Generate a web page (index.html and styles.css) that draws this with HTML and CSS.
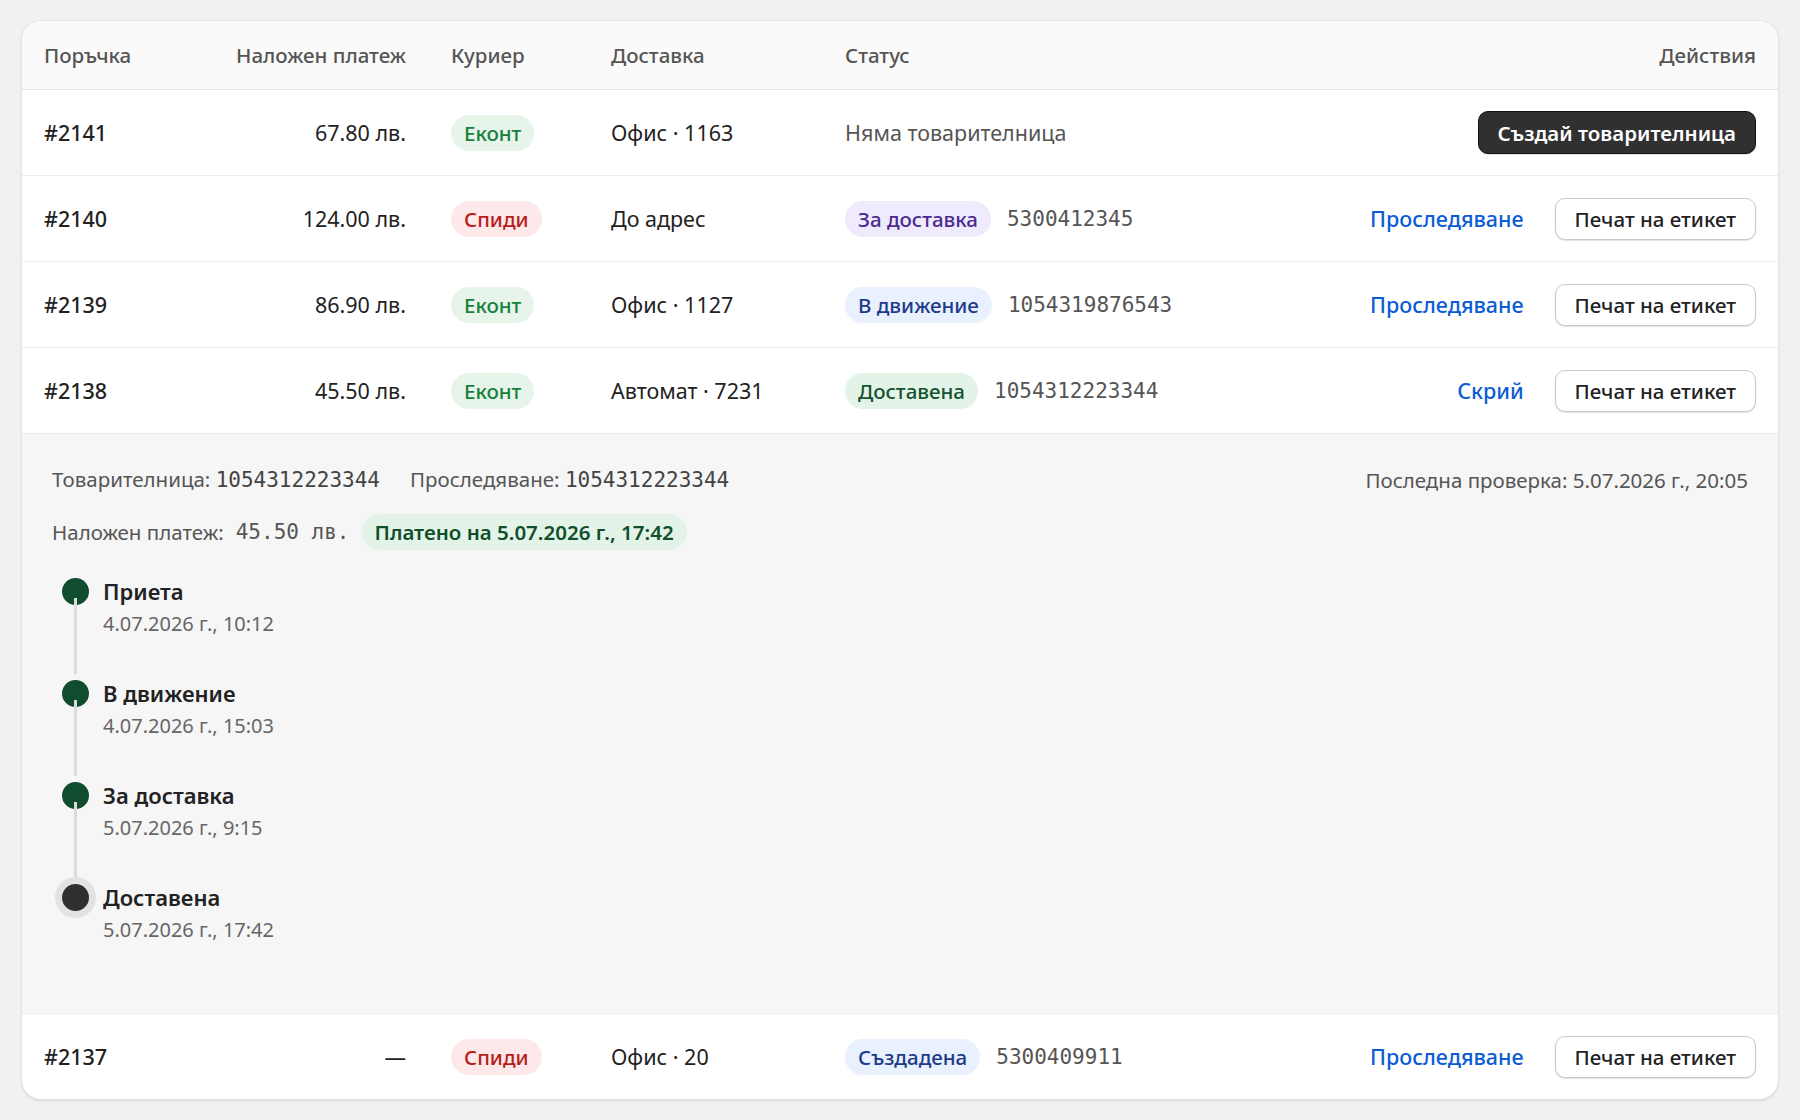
FILE: index.html
```html
<!DOCTYPE html>
<html lang="bg">
<head>
    <meta charset="UTF-8">
    <meta name="viewport" content="width=device-width, initial-scale=1.0">
    <title>Поръчки и товарителници</title>
    <link rel="stylesheet" href="styles.css">
</head>
<body>
    <div class="orders">
        <div class="row head">
            <div>Поръчка</div>
            <div class="amount">Наложен платеж</div>
            <div>Куриер</div>
            <div>Доставка</div>
            <div>Статус</div>
            <div class="actions">Действия</div>
        </div>

        <div class="row">
            <div class="order">#2141</div>
            <div class="amount">67.80 лв.</div>
            <div><span class="pill econt">Еконт</span></div>
            <div>Офис · 1163</div>
            <div class="status"><span class="muted">Няма товарителница</span></div>
            <div class="actions"><button class="btn dark">Създай товарителница</button></div>
        </div>

        <div class="row">
            <div class="order">#2140</div>
            <div class="amount">124.00 лв.</div>
            <div><span class="pill speedy">Спиди</span></div>
            <div>До адрес</div>
            <div class="status"><span class="pill out">За доставка</span><span class="track">5300412345</span></div>
            <div class="actions"><a class="link" href="#">Проследяване</a><button class="btn">Печат на етикет</button></div>
        </div>

        <div class="row">
            <div class="order">#2139</div>
            <div class="amount">86.90 лв.</div>
            <div><span class="pill econt">Еконт</span></div>
            <div>Офис · 1127</div>
            <div class="status"><span class="pill transit">В движение</span><span class="track">1054319876543</span></div>
            <div class="actions"><a class="link" href="#">Проследяване</a><button class="btn">Печат на етикет</button></div>
        </div>

        <div class="row">
            <div class="order">#2138</div>
            <div class="amount">45.50 лв.</div>
            <div><span class="pill econt">Еконт</span></div>
            <div>Автомат · 7231</div>
            <div class="status"><span class="pill done">Доставена</span><span class="track">1054312223344</span></div>
            <div class="actions"><a class="link" href="#">Скрий</a><button class="btn">Печат на етикет</button></div>
        </div>

        <div class="details">
            <div class="details-line">
                <div class="ids">
                    <span>Товарителница: <span class="mono">1054312223344</span></span>
                    <span>Проследяване: <span class="mono">1054312223344</span></span>
                </div>
                <span>Последна проверка: 5.07.2026 г., 20:05</span>
            </div>
            <div class="details-cod">
                <span>Наложен платеж:</span>
                <span class="mono">45.50 лв.</span>
                <span class="pill paid">Платено на 5.07.2026 г., 17:42</span>
            </div>
            <ul class="timeline">
                <li class="step">
                    <div class="step-title">Приета</div>
                    <div class="step-date">4.07.2026 г., 10:12</div>
                </li>
                <li class="step">
                    <div class="step-title">В движение</div>
                    <div class="step-date">4.07.2026 г., 15:03</div>
                </li>
                <li class="step">
                    <div class="step-title">За доставка</div>
                    <div class="step-date">5.07.2026 г., 9:15</div>
                </li>
                <li class="step current">
                    <div class="step-title">Доставена</div>
                    <div class="step-date">5.07.2026 г., 17:42</div>
                </li>
            </ul>
        </div>

        <div class="row">
            <div class="order">#2137</div>
            <div class="amount">—</div>
            <div><span class="pill speedy">Спиди</span></div>
            <div>Офис · 20</div>
            <div class="status"><span class="pill created">Създадена</span><span class="track">5300409911</span></div>
            <div class="actions"><a class="link" href="#">Проследяване</a><button class="btn">Печат на етикет</button></div>
        </div>
    </div>
</body>
</html>
```

FILE: styles.css
```css
html, body {
    margin: 0;
    padding: 0;
    background: #f1f1f1;
    font-family: 'Noto Sans', 'Open Sans', sans-serif;
    color: #222;
}

body {
    padding: 20px 21px;
}

.orders {
    background: white;
    border: 1px solid #e4e4e4;
    border-radius: 20px;
    box-shadow: 0 1px 2px rgba(0, 0, 0, 0.1);
    overflow: hidden;
}

.row {
    display: grid;
    grid-template-columns: 120px 197px 115px 189px 1fr auto;
    column-gap: 45px;
    align-items: center;
    height: 85px;
    padding: 0 22px;
    font-size: 21.5px;
    border-bottom: 1px solid #ececec;
}

.row:last-child {
    border-bottom: none;
}

.head {
    height: 68px;
    background: #fafafa;
    color: #555;
    font-size: 20.5px;
    font-weight: 500;
    border-bottom: 1px solid #e2e2e2;
}

.order {
    font-weight: 500;
}

.amount {
    text-align: right;
}

.pill {
    display: inline-flex;
    align-items: center;
    height: 36px;
    padding: 0 13px;
    border-radius: 18px;
    font-size: 20.5px;
    font-weight: 500;
    white-space: nowrap;
}

.econt { background: #e6f4ea; color: #17803d; }
.speedy { background: #fde9e9; color: #b91c1c; }
.out { background: #efeafc; color: #4c2a8f; }
.transit { background: #e8f1fd; color: #1e3a8a; }
.done { background: #e3f3e8; color: #14532d; }
.created { background: #e8f1fd; color: #1e3a8a; }
.paid { background: #e3f3e8; color: #0f4f2a; font-weight: 600; }

.status {
    display: flex;
    align-items: center;
    gap: 16px;
}

.muted {
    color: #555;
}

.track, .mono {
    font-family: 'DejaVu Sans Mono', 'Liberation Mono', monospace;
    font-size: 21px;
    color: #555;
}

.actions {
    display: flex;
    align-items: center;
    justify-content: flex-end;
    gap: 31px;
}

.link {
    color: #0b5cd5;
    text-decoration: none;
    font-weight: 500;
}

.btn {
    font-family: inherit;
    font-size: 20.5px;
    font-weight: 500;
    height: 42px;
    padding: 0 19px;
    border-radius: 10px;
    border: 1px solid #c8c8c8;
    background: white;
    color: #222;
    box-shadow: 0 1px 1px rgba(0, 0, 0, 0.12);
}

.btn.dark {
    height: 43px;
    background: #303030;
    border-color: #111;
    color: white;
    font-weight: 600;
}

.details {
    background: #f6f6f6;
    padding: 31px 30px 28px;
    border-bottom: 1px solid #ececec;
    font-size: 20.5px;
    color: #555;
}

.details-line {
    display: flex;
    justify-content: space-between;
    align-items: center;
    line-height: 28px;
}

.ids {
    display: flex;
    gap: 30px;
}

.ids .mono {
    color: #444;
}

.details-cod {
    display: flex;
    align-items: center;
    gap: 12px;
    margin-top: 20px;
}

.timeline {
    list-style: none;
    margin: 27px 0 0;
    padding: 0;
}

.step {
    position: relative;
    padding: 0 0 42px 51px;
}

.step::before {
    content: '';
    position: absolute;
    left: 10px;
    top: 1px;
    width: 27px;
    height: 27px;
    border-radius: 50%;
    background: #0f4d2e;
}

.step::after {
    content: '';
    position: absolute;
    left: 22px;
    top: 21px;
    width: 3px;
    height: 76px;
    background: #dcdcdc;
}

.step.current::before {
    background: #2f2f2f;
    box-shadow: 0 0 0 7px #e2e2e2;
}

.step.current::after {
    display: none;
}

.step-title {
    font-size: 22px;
    font-weight: 600;
    line-height: 28px;
    color: #222;
}

.step-date {
    margin-top: 6px;
    font-size: 20px;
    line-height: 26px;
    color: #666;
}
```
